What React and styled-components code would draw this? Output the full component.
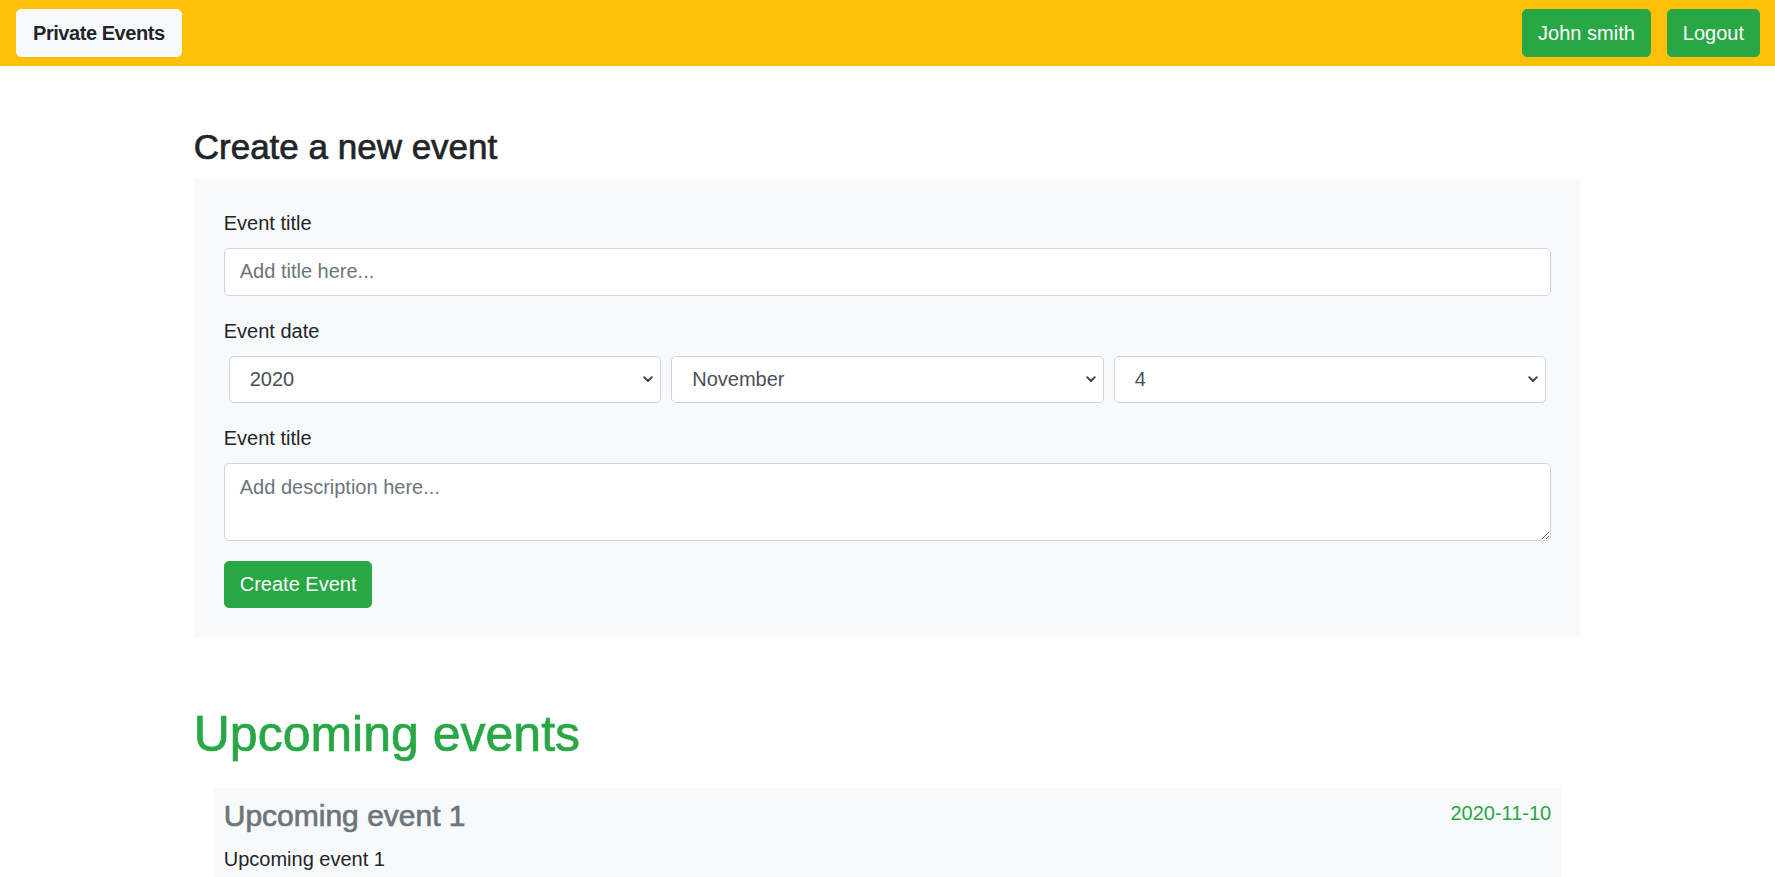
import React from "react";
import styled, { createGlobalStyle, css } from "styled-components";

const GlobalStyle = createGlobalStyle`
  *, *::before, *::after { box-sizing: border-box; }
  html, body {
    margin: 0;
    padding: 0;
    overflow: hidden;
  }
  body {
    font-family: "Liberation Sans", Arial, sans-serif;
    font-size: 20px;
    line-height: 1.5;
    color: #212529;
    background: #ffffff;
  }
`;

const Navbar = styled.nav`
  display: flex;
  align-items: center;
  justify-content: space-between;
  height: 66px;
  padding: 0 15px 0 16px;
  background: #ffc107;
`;

const NavActions = styled.div`
  display: flex;
  align-items: center;
  gap: 16px;
`;

const variants = {
  light: css`
    background: #f8f9fa;
    border-color: #f8f9fa;
    color: #212529;
    font-weight: 700;
    letter-spacing: -0.45px;
    padding: 7.5px 16px;
  `,
  success: css`
    background: #28a745;
    border-color: #28a745;
    color: #ffffff;
    font-weight: 400;
  `,
};

const Button = styled.button`
  display: inline-block;
  font-family: inherit;
  font-size: 20px;
  line-height: 1.5;
  height: 47.5px;
  padding: 7.5px 15px;
  border: 1px solid transparent;
  border-radius: 5px;
  cursor: pointer;
  ${(p) => variants[p.$variant || "success"]}
`;

const headingWeight = css`
  font-weight: 500;
  -webkit-text-stroke: 0.7px currentColor;
`;

const Container = styled.main`
  max-width: 1425px;
  margin: 60px auto 0;
  padding: 0 18.75px;
`;

const SectionTitle = styled.h3`
  margin: 0 0 10px;
  font-size: 35px;
  line-height: 1.2;
  color: #212529;
  ${headingWeight}
`;

const FormPanel = styled.form`
  background: #f8f9fa;
  padding: 30px;
`;

const FormGroup = styled.div`
  margin-bottom: 20px;
`;

const Label = styled.label`
  display: block;
  margin-bottom: 10px;
  color: #212529;
`;

const fieldBase = css`
  display: block;
  width: 100%;
  font-family: inherit;
  font-size: 20px;
  line-height: 1.5;
  color: #495057;
  background: #ffffff;
  border: 1px solid #ced4da;
  border-radius: 5px;
  outline: none;
  &::placeholder {
    color: #6c757d;
    opacity: 1;
  }
`;

const TextInput = styled.input`
  ${fieldBase}
  height: 47.5px;
  padding: 7.5px 15px;
`;

const TextArea = styled.textarea`
  ${fieldBase}
  height: 77.5px;
  padding: 7.5px 15px;
  resize: vertical;
`;

const SelectRow = styled.div`
  display: flex;
`;

const SelectWrap = styled.div`
  position: relative;
  flex: 1 1 0;
  margin: 0 5px;
`;

const Select = styled.select`
  ${fieldBase}
  appearance: none;
  -webkit-appearance: none;
  height: 47.5px;
  padding: 0 36px 0 20px;
`;

const Chevron = styled.svg`
  position: absolute;
  right: 8px;
  top: 50%;
  width: 10px;
  height: 7px;
  margin-top: -3px;
  pointer-events: none;
`;

const UpcomingTitle = styled.h1`
  margin: 66px 0 10px;
  font-size: 50px;
  line-height: 1.2;
  color: #28a745;
  ${headingWeight}
`;

const EventList = styled.div`
  margin-top: 24px;
  padding: 0 20px;
`;

const EventCard = styled.article`
  background: #f8f9fa;
  padding: 10px;
  margin-bottom: 20px;
`;

const CardHeader = styled.div`
  display: flex;
  justify-content: space-between;
  align-items: flex-start;
`;

const CardTitle = styled.h4`
  margin: 0 0 10px;
  font-size: 30px;
  line-height: 1.2;
  color: #6c757d;
  ${headingWeight}
`;

const CardDate = styled.span`
  color: #28a745;
`;

const CardText = styled.p`
  margin: 0;
  color: #212529;
`;

const months = [
  "January", "February", "March", "April", "May", "June",
  "July", "August", "September", "October", "November", "December",
];

function SelectField({ value, options }) {
  return (
    <SelectWrap>
      <Select defaultValue={value}>
        {options.map((o) => (
          <option key={o} value={o}>
            {o}
          </option>
        ))}
      </Select>
      <Chevron viewBox="0 0 10 7" aria-hidden="true">
        <polyline
          points="1.2,1.2 5,5 8.8,1.2"
          fill="none"
          stroke="#3d4349"
          strokeWidth="1.9"
          strokeLinecap="round"
          strokeLinejoin="round"
        />
      </Chevron>
    </SelectWrap>
  );
}

export default function App() {
  const years = ["2020", "2021", "2022", "2023"];
  const days = Array.from({ length: 31 }, (_, i) => String(i + 1));
  const events = [
    { title: "Upcoming event 1", date: "2020-11-10", text: "Upcoming event 1" },
  ];

  return (
    <>
      <GlobalStyle />
      <Navbar>
        <Button $variant="light" type="button">Private Events</Button>
        <NavActions>
          <Button $variant="success" type="button">John smith</Button>
          <Button $variant="success" type="button">Logout</Button>
        </NavActions>
      </Navbar>

      <Container>
        <SectionTitle>Create a new event</SectionTitle>
        <FormPanel onSubmit={(e) => e.preventDefault()}>
          <FormGroup>
            <Label htmlFor="title">Event title</Label>
            <TextInput id="title" type="text" placeholder="Add title here..." />
          </FormGroup>
          <FormGroup>
            <Label>Event date</Label>
            <SelectRow>
              <SelectField value="2020" options={years} />
              <SelectField value="November" options={months} />
              <SelectField value="4" options={days} />
            </SelectRow>
          </FormGroup>
          <FormGroup>
            <Label htmlFor="desc">Event title</Label>
            <TextArea id="desc" rows={2} placeholder="Add description here..." />
          </FormGroup>
          <Button $variant="success" type="submit">Create Event</Button>
        </FormPanel>

        <UpcomingTitle>Upcoming events</UpcomingTitle>
        <EventList>
          {events.map((ev) => (
            <EventCard key={ev.title}>
              <CardHeader>
                <CardTitle>{ev.title}</CardTitle>
                <CardDate>{ev.date}</CardDate>
              </CardHeader>
              <CardText>{ev.text}</CardText>
            </EventCard>
          ))}
        </EventList>
      </Container>
    </>
  );
}
